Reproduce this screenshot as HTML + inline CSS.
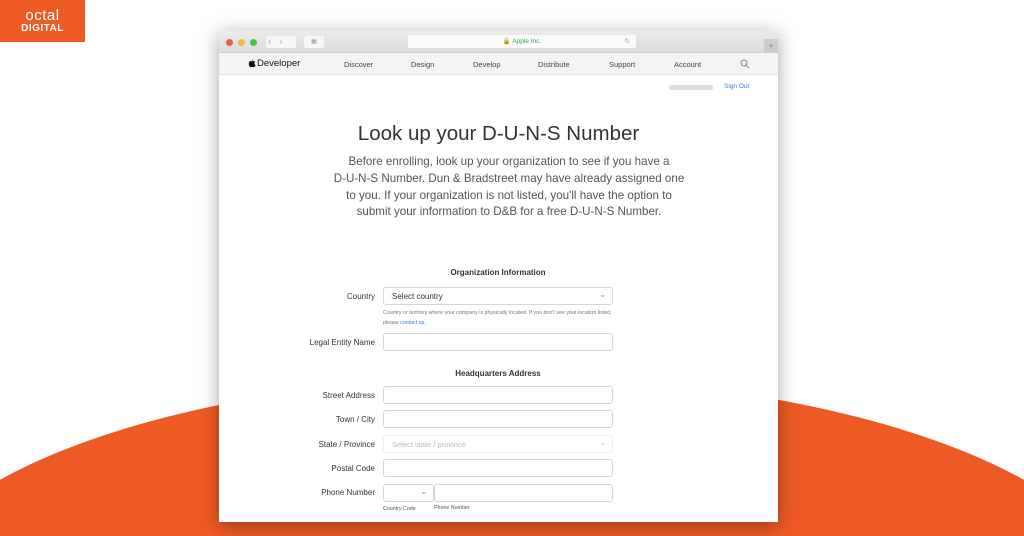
<!DOCTYPE html>
<html><head><style>
*{margin:0;padding:0;box-sizing:border-box}
html,body{width:1024px;height:536px;overflow:hidden}
body{background:#fff;font-family:"Liberation Sans",sans-serif;position:relative}
.abs{position:absolute}
.win{left:219px;top:30px;width:559px;height:492px;background:#fff;box-shadow:0 4px 18px rgba(0,0,0,.35);overflow:hidden}
.lbl{position:absolute;right:403px;font-size:8px;color:#333;text-align:right;white-space:nowrap}
.inp{position:absolute;left:164px;width:230px;height:18px;border:1px solid #d6d6d6;border-radius:3px;background:#fff}
.nav span{position:absolute;top:7px;font-size:7.5px;color:#444}
</style></head><body>
<svg class="abs" style="left:0;top:0" width="1024" height="536"><ellipse cx="512" cy="613" rx="620" ry="236" fill="#ee5a24"/></svg>
<div class="abs" style="left:0;top:0;width:85px;height:42px;background:#ee5a24;color:#fff;text-align:center">
<div style="font-size:15px;line-height:14px;margin-top:9px;font-weight:300;letter-spacing:.5px">octal</div>
<div style="font-size:10px;font-weight:bold;line-height:11px;letter-spacing:.5px">DIGITAL</div></div>
<div class="abs win">
<div class="abs" style="left:0;top:0;width:559px;height:23px;background:linear-gradient(#ececec,#dcdcdc);border-bottom:1px solid #cfcfcf"></div>
<div class="abs" style="left:7px;top:9px;width:7px;height:7px;border-radius:50%;background:#f05b55"></div>
<div class="abs" style="left:19px;top:9px;width:7px;height:7px;border-radius:50%;background:#f3bd3a"></div>
<div class="abs" style="left:31px;top:9px;width:7px;height:7px;border-radius:50%;background:#3ec645"></div>
<div class="abs" style="left:47px;top:6px;width:30px;height:12px;background:#f7f7f7;border-radius:2px;font-size:8px;color:#999;line-height:12px">&nbsp;‹&nbsp;&nbsp;&nbsp;&nbsp;›</div>
<div class="abs" style="left:85px;top:6px;width:20px;height:12px;background:#f7f7f7;border-radius:2px;font-size:6px;color:#999;text-align:center;line-height:12px">▦</div>
<div class="abs" style="left:189px;top:5px;width:228px;height:13px;background:#fbfbfb;border-radius:2px;font-size:6.5px;color:#2fa84f;text-align:center;line-height:13px">🔒 Apple Inc.<span style="position:absolute;right:6px;color:#999">↻</span></div>
<div class="abs" style="left:545px;top:9px;width:14px;height:14px;background:#ccc;color:#888;font-size:9px;text-align:center;line-height:14px">+</div>
<div class="abs nav" style="left:0;top:23px;width:559px;height:22px;background:#f4f4f4;border-bottom:1px solid #e4e4e4">
<svg class="abs" style="left:29px;top:6px" width="8" height="10" viewBox="0 0 8 10"><path d="M5.3 0.3c0 .8-.6 1.5-1.3 1.6C3.9 1.1 4.6.3 5.3.3zM4 2.4c.5 0 1-.4 1.6-.4.4 0 1.2.1 1.7.8-1.300.8-1.1 2.7.3 3.2-.3.9-1 2.3-1.8 2.3-.6 0-.8-.3-1.5-.3s-.9.3-1.5.3C2 8.3.8 6.3.8 4.6.8 3 1.8 2 2.7 2c.6 0 .9.4 1.3.4z" fill="#111"/></svg>
<span style="left:38px;top:5px;font-size:9.5px;color:#111">Developer</span>
<span style="left:125px">Discover</span><span style="left:192px">Design</span><span style="left:254px">Develop</span><span style="left:319px">Distribute</span><span style="left:390px">Support</span><span style="left:455px">Account</span>
<svg class="abs" style="left:521px;top:6px" width="10" height="10"><circle cx="4" cy="4" r="3" fill="none" stroke="#888" stroke-width="1"/><line x1="6.2" y1="6.2" x2="9" y2="9" stroke="#888"/></svg></div>
<div class="abs" style="left:450px;top:55px;width:44px;height:5px;background:#ddd;border-radius:2px"></div>
<div class="abs" style="left:505px;top:53px;font-size:6.5px;color:#3b7bd0">Sign Out</div>
<div class="abs" style="left:0;top:92px;width:559px;text-align:center;font-size:20.5px;color:#333">Look up your D-U-N-S Number</div>
<div class="abs" style="left:70px;top:124px;width:440px;text-align:center;font-size:11.6px;line-height:16.8px;color:#555">Before enrolling, look up your organization to see if you have a<br>D-U-N-S Number. Dun &amp; Bradstreet may have already assigned one<br>to you. If your organization is not listed, you'll have the option to<br>submit your information to D&amp;B for a free D-U-N-S Number.</div>
<div class="abs" style="left:164px;top:238px;width:230px;text-align:center;font-size:8px;font-weight:bold;color:#333">Organization Information</div>
<div class="lbl" style="top:262px">Country</div>
<div class="inp" style="top:257px;font-size:8px;color:#333;padding:4px 8px">Select country<span style="position:absolute;right:6px;top:2px;color:#6aa0d8">⌄</span></div>
<div class="abs" style="left:164px;top:278px;width:240px;font-size:5.3px;line-height:10px;color:#777">Country or territory where your company is physically located. If you don't see your location listed, please <span style="color:#3b7bd0">contact us.</span></div>
<div class="lbl" style="top:308px">Legal Entity Name</div>
<div class="inp" style="top:303px"></div>
<div class="abs" style="left:164px;top:339px;width:230px;text-align:center;font-size:8px;font-weight:bold;color:#333">Headquarters Address</div>
<div class="lbl" style="top:361px">Street Address</div><div class="inp" style="top:356px"></div>
<div class="lbl" style="top:385px">Town / City</div><div class="inp" style="top:380px"></div>
<div class="lbl" style="top:410px">State / Province</div><div class="inp" style="top:405px;border-color:#eee;font-size:7.5px;color:#bbb;padding:4px 8px">Select state / province<span style="position:absolute;right:6px;top:2px">⌄</span></div>
<div class="lbl" style="top:434px">Postal Code</div><div class="inp" style="top:429px"></div>
<div class="lbl" style="top:458px">Phone Number</div>
<div class="inp" style="top:454px;width:51px;color:#6aa0d8;font-size:9px;padding:1px 0 0 36px">⌄</div>
<div class="inp" style="top:454px;left:215px;width:179px"></div>
<div class="abs" style="left:164px;top:476px;font-size:5.3px;color:#555">Country Code</div>
<div class="abs" style="left:215px;top:475px;font-size:5.3px;color:#555">Phone Number</div>
</div>
</body></html>
